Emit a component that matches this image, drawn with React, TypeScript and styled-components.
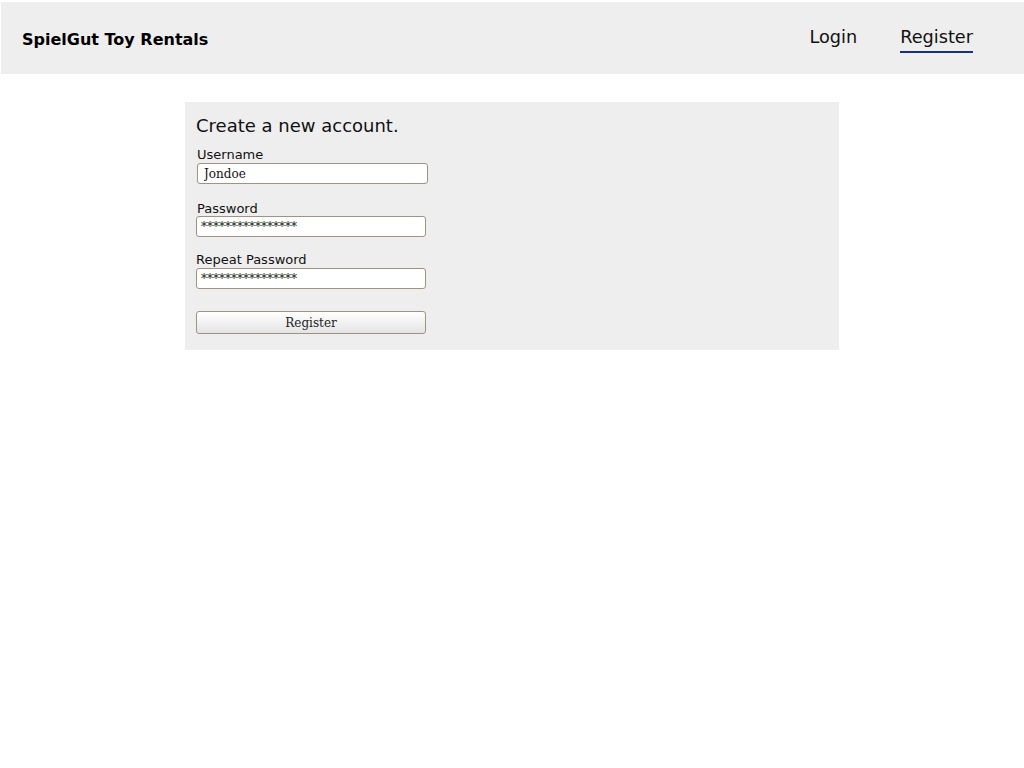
import React from 'react';
import styled, { createGlobalStyle } from 'styled-components';

const GlobalStyle = createGlobalStyle`
  html, body {
    margin: 0;
    padding: 0;
    background: #ffffff;
  }
  body {
    font-family: "DejaVu Sans", "Liberation Sans", sans-serif;
    color: #111;
  }
`;

const Header = styled.header`
  display: flex;
  align-items: center;
  justify-content: space-between;
  height: 72px;
  margin: 2px 0 0 1px;
  padding: 0 51px 0 21px;
  background: #eeeeee;
`;

const Brand = styled.div`
  font-size: 16px;
  font-weight: bold;
  color: #000;
  padding-top: 2px;
`;

const Nav = styled.nav`
  display: flex;
  align-items: center;
  gap: 43px;
  padding-top: 4px;
`;

const NavLink = styled.a<{ $active?: boolean }>`
  font-size: 17.7px;
  color: #111;
  text-decoration: none;
  padding-bottom: 4px;
  border-bottom: 2px solid ${(p) => (p.$active ? '#1b2f7d' : 'transparent')};
  cursor: pointer;
`;

const Card = styled.section`
  width: 654px;
  box-sizing: border-box;
  margin: 28px auto 0;
  padding: 13px 11px 16px;
  background: #eeeeee;
`;

const Title = styled.h2`
  margin: 0 0 10px;
  font-size: 18px;
  font-weight: normal;
  line-height: 22px;
`;

const Field = styled.div<{ $indent?: boolean; $space: number }>`
  display: flex;
  flex-direction: column;
  align-items: flex-start;
  margin-bottom: ${(p) => p.$space}px;
  padding-left: ${(p) => (p.$indent ? '1px' : '0')};
`;

const Label = styled.label<{ $tight?: boolean }>`
  font-size: 13px;
  line-height: 15px;
  margin-bottom: ${(p) => (p.$tight ? '0' : '1px')};
  padding-left: ${(p) => (p.$tight ? '1px' : '0')};
`;

const Input = styled.input<{ $wide?: boolean; $pad?: number }>`
  box-sizing: border-box;
  width: ${(p) => (p.$wide ? '231px' : '230px')};
  height: 21px;
  padding: 0 ${(p) => p.$pad ?? 4}px;
  border: 1px solid #9e9384;
  border-radius: 3px;
  background: #fff;
  font-family: "DejaVu Serif", "Liberation Serif", serif;
  font-size: 12px;
  color: #111;
  outline: none;
`;

const Button = styled.button`
  box-sizing: border-box;
  width: 230px;
  height: 23px;
  border: 1px solid #9e9384;
  border-radius: 3px;
  background: linear-gradient(#ffffff, #f3f3f3 45%, #e4e4e4);
  font-family: "DejaVu Serif", "Liberation Serif", serif;
  font-size: 12px;
  color: #222;
  cursor: pointer;
`;

export default function App() {
  return (
    <>
      <GlobalStyle />
      <Header>
        <Brand>SpielGut Toy Rentals</Brand>
        <Nav>
          <NavLink>Login</NavLink>
          <NavLink $active>Register</NavLink>
        </Nav>
      </Header>
      <Card>
        <Title>Create a new account.</Title>
        <Field $indent $space={17}>
          <Label>Username</Label>
          <Input $wide $pad={6} defaultValue="Jondoe" />
        </Field>
        <Field $space={15}>
          <Label $tight>Password</Label>
          <Input readOnly value="****************" />
        </Field>
        <Field $space={22}>
          <Label>Repeat Password</Label>
          <Input readOnly value="****************" />
        </Field>
        <Button type="button">Register</Button>
      </Card>
    </>
  );
}
